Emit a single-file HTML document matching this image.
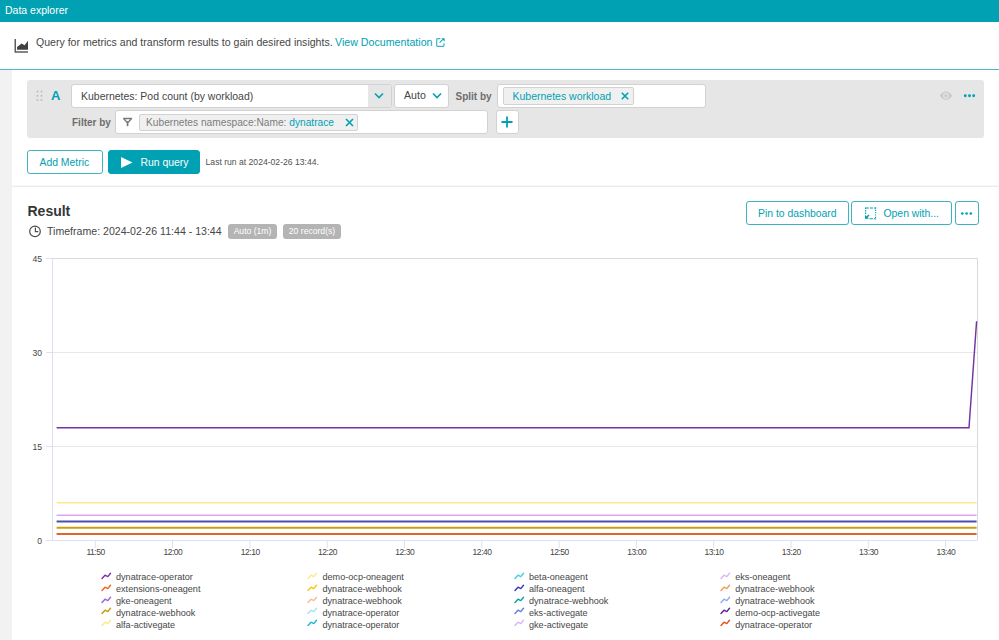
<!DOCTYPE html>
<html><head><meta charset="utf-8">
<style>
*{box-sizing:border-box;margin:0;padding:0}
html,body{width:999px;height:640px;overflow:hidden;background:#fff;font-family:"Liberation Sans",sans-serif;color:#454646}
.a{position:absolute;white-space:nowrap}
#hdr{left:0;top:0;width:999px;height:22px;background:#00a1b2}
#hdr span{position:absolute;left:5px;top:4.2px;font-size:10.5px;color:#fff}
#strip{left:0;top:70px;width:12px;height:570px;background:#f2f2f2}
#tline{left:0;top:69px;width:999px;height:1px;background:#4cb9c5}
#panel{left:27px;top:80px;width:957px;height:58.4px;background:#e6e6e6;border-radius:3px}
.inp{position:absolute;background:#fff;border:1px solid #d2d2d2;border-radius:3px}
.chip{position:absolute;background:#f0f0f0;border:1px solid #d2d2d2;border-radius:2px}
.btn{position:absolute;border:1px solid #00a1b2;border-radius:3px;color:#00a1b2;background:#fff;font-size:10.4px}
.lbl{font-weight:bold;color:#6d6d6d;font-size:10px}
.badge{position:absolute;background:#b4b4b4;color:#fff;border-radius:3px;height:14.6px;font-size:8.6px;text-align:center;line-height:15px}
#sep{left:12px;top:186px;width:987px;height:1px;background:#ececec;box-shadow:0 -1px 0 #f7f7f7}
</style></head>
<body>
<div id="hdr" class="a"><span>Data explorer</span></div>
<svg class="a" style="left:10px;top:34px" width="24" height="24" viewBox="0 0 24 24">
<path d="M5.25 4.9V18.1H18" stroke="#5e5e5e" stroke-width="1.5" fill="none"/>
<path d="M7.1 15.8V13.1L11.6 9.5L14.6 11.3L18 6.8V15.8Z" fill="#404040"/>
</svg>
<div class="a" style="left:36px;top:36px;font-size:10.55px">Query for metrics and transform results to gain desired insights.</div><div class="a" style="left:335px;top:36px;font-size:10.66px;color:#00a1b2">View Documentation</div>
<svg class="a" style="left:436px;top:38px" width="9" height="9" viewBox="0 0 9 9"><path d="M4.2 0.7H1.5Q0.7 0.7 0.7 1.5V7.5Q0.7 8.3 1.5 8.3H7.2Q8 8.3 8 7.5V5.2" stroke="#3fb3c0" stroke-width="1.2" fill="none"/><path d="M3.6 4.6L6.6 1.6" stroke="#1aa8b8" stroke-width="1.2"/><path d="M5.2 0.2H8.6V3.6Z" fill="#00a1b2"/></svg>
<div id="tline" class="a"></div>
<div id="strip" class="a"></div>
<div id="sep" class="a"></div>

<!-- query panel -->
<div id="panel" class="a"></div>
<svg class="a" style="left:36px;top:90px" width="8" height="12" viewBox="0 0 8 12"><g fill="#bdbdbd"><circle cx="1.5" cy="1.5" r="1"/><circle cx="5.5" cy="1.5" r="1"/><circle cx="1.5" cy="5.8" r="1"/><circle cx="5.5" cy="5.8" r="1"/><circle cx="1.5" cy="10" r="1"/><circle cx="5.5" cy="10" r="1"/></g></svg>
<div class="a" style="left:51px;top:88px;font-size:13px;font-weight:bold;color:#00a1b2">A</div>
<div class="inp" style="left:71px;top:84px;width:321px;height:24px;overflow:hidden"><div style="position:absolute;right:0;top:0;width:23px;height:22px;background:#e6e6e6"></div></div>
<div class="a" style="left:81px;top:90.7px;font-size:10.47px">Kubernetes: Pod count (by workload)</div>
<svg class="a" style="left:374px;top:92px" width="10" height="8" viewBox="0 0 10 8"><path d="M1 1.5L5 5.5L9 1.5" stroke="#00a1b2" stroke-width="1.6" fill="none"/></svg>
<div class="inp" style="left:394px;top:84px;width:55px;height:24px"></div>
<div class="a" style="left:404px;top:89px;font-size:10.6px">Auto</div>
<svg class="a" style="left:432px;top:92px" width="10" height="8" viewBox="0 0 10 8"><path d="M1 1.5L5 5.5L9 1.5" stroke="#00a1b2" stroke-width="1.6" fill="none"/></svg>
<div class="a lbl" style="left:455.5px;top:90.8px">Split by</div>
<div class="inp" style="left:496.5px;top:84px;width:209px;height:24px"></div>
<div class="chip" style="left:503px;top:87px;width:131px;height:18px"></div>
<div class="a" style="left:512.5px;top:90px;font-size:10.5px;color:#00a1b2">Kubernetes workload</div>
<svg class="a" style="left:621px;top:92px" width="8" height="8" viewBox="0 0 8 8"><path d="M0.8 0.8L7.2 7.2M7.2 0.8L0.8 7.2" stroke="#00a1b2" stroke-width="1.6"/></svg>
<svg class="a" style="left:938px;top:89px" width="16" height="14" viewBox="0 0 16 14"><path d="M1.8 6.7C3.6 3.9 5.6 2.5 8 2.5S12.4 3.9 14.2 6.7C12.4 9.5 10.4 10.8 8 10.8S3.6 9.5 1.8 6.7Z" fill="#cbcbcb"/><circle cx="8" cy="6.7" r="2.9" fill="#e4e4e4"/><circle cx="8" cy="6.7" r="1.8" fill="#cccccc"/></svg>
<svg class="a" style="left:963px;top:93px" width="13" height="5" viewBox="0 0 13 5"><g fill="#00a1b2"><circle cx="2.3" cy="2.7" r="1.45"/><circle cx="6.5" cy="2.7" r="1.45"/><circle cx="10.7" cy="2.7" r="1.45"/></g></svg>
<div class="a lbl" style="left:72px;top:117.2px">Filter by</div>
<div class="inp" style="left:115.3px;top:110px;width:373px;height:24px"></div>
<svg class="a" style="left:118px;top:112px" width="20" height="20" viewBox="0 0 20 20"><path d="M5.6 6.5H13.6L10.5 10H8.7Z" fill="none" stroke="#7a7a7a" stroke-width="1.3" stroke-linejoin="round"/><path d="M8.7 9.5H10.4V14.1Q9.55 14.6 8.7 14.1Z" fill="#7a7a7a"/></svg>
<div class="chip" style="left:139px;top:113.5px;width:219px;height:17px"></div>
<div class="a" style="left:146px;top:117.2px;font-size:10.2px;color:#7c7c7c">Kubernetes namespace:Name: <span style="color:#00a1b2">dynatrace</span></div>
<svg class="a" style="left:345px;top:118px" width="9" height="9" viewBox="0 0 9 9"><path d="M1 1L8 8M8 1L1 8" stroke="#00a1b2" stroke-width="1.6"/></svg>
<div class="inp" style="left:495.5px;top:110px;width:23.5px;height:24px"></div>
<svg class="a" style="left:501px;top:116px" width="12" height="12" viewBox="0 0 12 12"><path d="M6 0.5V11.5M0.5 6H11.5" stroke="#00a1b2" stroke-width="1.8"/></svg>

<!-- actions -->
<div class="btn" style="left:27px;top:150px;width:76px;height:24px;border-color:#3fb3c0"><span class="a" style="left:11.5px;top:6px">Add Metric</span></div>
<div class="btn" style="left:108px;top:150px;width:92px;height:24px;background:#00a1b2;color:#fff"></div>
<svg class="a" style="left:121px;top:157px" width="12" height="11" viewBox="0 0 12 11"><path d="M0 0L11.5 5.5L0 11Z" fill="#fff"/></svg>
<div class="a" style="left:140.5px;top:157.2px;font-size:10.4px;color:#fff">Run query</div>
<div class="a" style="left:205.6px;top:157.3px;font-size:8.6px;color:#505050">Last run at 2024-02-26 13:44.</div>

<!-- result -->
<div class="a" style="left:27.5px;top:203.3px;font-size:14px;font-weight:bold;color:#353535">Result</div>
<svg class="a" style="left:28px;top:224px" width="14" height="14" viewBox="0 0 14 14"><circle cx="7" cy="7.4" r="5.3" fill="none" stroke="#4a4a4a" stroke-width="1.2"/><path d="M7.4 3.6V7.6H10.3" fill="none" stroke="#4a4a4a" stroke-width="1.2"/></svg>
<div class="a" style="left:47px;top:225px;font-size:10.58px">Timeframe: 2024-02-26 11:44 - 13:44</div>
<div class="badge" style="left:228px;top:224px;width:49px">Auto (1m)</div>
<div class="badge" style="left:283px;top:224px;width:58px">20 record(s)</div>
<div class="btn" style="left:746px;top:201px;width:102.5px;height:24px;border-color:#3db3c0"><span class="a" style="left:11px;top:6px">Pin to dashboard</span></div>
<div class="btn" style="left:851px;top:201px;width:100.5px;height:24px;border-color:#3db3c0"></div>
<svg class="a" style="left:860px;top:202px" width="24" height="22" viewBox="0 0 24 22"><g fill="none" stroke="#00a1b2" stroke-width="1.1"><path d="M5.6 6.0H16.1" stroke-dasharray="3.2 1 3.2 1 2"/><path d="M15.6 5.5V17.3" stroke-dasharray="1.2 1.1"/><path d="M5.6 5.5V12.6" stroke-dasharray="1.4 1.1"/><path d="M9.6 16.8H16.1" stroke-dasharray="3.2 1 2"/></g><path d="M5 16.8V12.8L9.1 16.8Z" fill="#00a1b2"/><path d="M5.7 16.3L9 12.9" stroke="#00a1b2" stroke-width="1.5"/></svg>
<div class="a" style="left:883.5px;top:207.9px;font-size:10.4px;color:#00a1b2">Open with...</div>
<div class="btn" style="left:955px;top:201px;width:23.5px;height:24px;border-color:#3db3c0"></div>
<svg class="a" style="left:959px;top:210.5px" width="14" height="5" viewBox="0 0 14 5"><g fill="#00a1b2"><circle cx="3.3" cy="2.5" r="1.35"/><circle cx="7.6" cy="2.5" r="1.35"/><circle cx="11.8" cy="2.5" r="1.35"/></g></svg>
<svg class="a" style="left:0;top:0" width="999" height="640" viewBox="0 0 999 640" font-family="Liberation Sans, sans-serif">
<line x1="52" y1="446.5" x2="977" y2="446.5" stroke="#e8e8e8" stroke-width="1"/>
<line x1="52" y1="352.5" x2="977" y2="352.5" stroke="#e8e8e8" stroke-width="1"/>
<path d="M52 258.5H977.5V540" fill="none" stroke="#d9d9d9" stroke-width="1"/>
<line x1="46" y1="540.5" x2="52" y2="540.5" stroke="#dbe1f2" stroke-width="1"/>
<line x1="46" y1="446.5" x2="52" y2="446.5" stroke="#dbe1f2" stroke-width="1"/>
<line x1="46" y1="352.5" x2="52" y2="352.5" stroke="#dbe1f2" stroke-width="1"/>
<line x1="46" y1="258.5" x2="52" y2="258.5" stroke="#dbe1f2" stroke-width="1"/>
<line x1="52.5" y1="258" x2="52.5" y2="541" stroke="#dbe1f2" stroke-width="1"/>
<line x1="46" y1="540.5" x2="977.5" y2="540.5" stroke="#dbe1f2" stroke-width="1"/>
<line x1="95.3" y1="540" x2="95.3" y2="548" stroke="#dbe1f2" stroke-width="1"/>
<text x="95.6" y="554.8" font-size="8.5" letter-spacing="-0.45" text-anchor="middle" fill="#454646">11:50</text>
<line x1="172.6" y1="540" x2="172.6" y2="548" stroke="#dbe1f2" stroke-width="1"/>
<text x="172.9" y="554.8" font-size="8.5" letter-spacing="-0.45" text-anchor="middle" fill="#454646">12:00</text>
<line x1="249.9" y1="540" x2="249.9" y2="548" stroke="#dbe1f2" stroke-width="1"/>
<text x="250.2" y="554.8" font-size="8.5" letter-spacing="-0.45" text-anchor="middle" fill="#454646">12:10</text>
<line x1="327.2" y1="540" x2="327.2" y2="548" stroke="#dbe1f2" stroke-width="1"/>
<text x="327.5" y="554.8" font-size="8.5" letter-spacing="-0.45" text-anchor="middle" fill="#454646">12:20</text>
<line x1="404.5" y1="540" x2="404.5" y2="548" stroke="#dbe1f2" stroke-width="1"/>
<text x="404.8" y="554.8" font-size="8.5" letter-spacing="-0.45" text-anchor="middle" fill="#454646">12:30</text>
<line x1="481.8" y1="540" x2="481.8" y2="548" stroke="#dbe1f2" stroke-width="1"/>
<text x="482.1" y="554.8" font-size="8.5" letter-spacing="-0.45" text-anchor="middle" fill="#454646">12:40</text>
<line x1="559.1" y1="540" x2="559.1" y2="548" stroke="#dbe1f2" stroke-width="1"/>
<text x="559.4" y="554.8" font-size="8.5" letter-spacing="-0.45" text-anchor="middle" fill="#454646">12:50</text>
<line x1="636.4" y1="540" x2="636.4" y2="548" stroke="#dbe1f2" stroke-width="1"/>
<text x="636.7" y="554.8" font-size="8.5" letter-spacing="-0.45" text-anchor="middle" fill="#454646">13:00</text>
<line x1="713.7" y1="540" x2="713.7" y2="548" stroke="#dbe1f2" stroke-width="1"/>
<text x="714.0" y="554.8" font-size="8.5" letter-spacing="-0.45" text-anchor="middle" fill="#454646">13:10</text>
<line x1="791.0" y1="540" x2="791.0" y2="548" stroke="#dbe1f2" stroke-width="1"/>
<text x="791.3" y="554.8" font-size="8.5" letter-spacing="-0.45" text-anchor="middle" fill="#454646">13:20</text>
<line x1="868.3" y1="540" x2="868.3" y2="548" stroke="#dbe1f2" stroke-width="1"/>
<text x="868.6" y="554.8" font-size="8.5" letter-spacing="-0.45" text-anchor="middle" fill="#454646">13:30</text>
<line x1="945.6" y1="540" x2="945.6" y2="548" stroke="#dbe1f2" stroke-width="1"/>
<text x="945.9" y="554.8" font-size="8.5" letter-spacing="-0.45" text-anchor="middle" fill="#454646">13:40</text>
<text x="42" y="543.5" font-size="8.6" text-anchor="end" fill="#454646">0</text>
<text x="42" y="449.5" font-size="8.6" text-anchor="end" fill="#454646">15</text>
<text x="42" y="355.5" font-size="8.6" text-anchor="end" fill="#454646">30</text>
<text x="42" y="261.5" font-size="8.6" text-anchor="end" fill="#454646">45</text>
<line x1="56.6" y1="502.7" x2="976.6" y2="502.7" stroke="#fce98c" stroke-width="1.5"/>
<line x1="56.6" y1="515.2" x2="976.6" y2="515.2" stroke="#d9a8f0" stroke-width="1.5"/>
<line x1="56.6" y1="521.5" x2="976.6" y2="521.5" stroke="#4b4eb0" stroke-width="2"/>
<line x1="56.6" y1="527.8" x2="976.6" y2="527.8" stroke="#c9a10c" stroke-width="2"/>
<line x1="56.6" y1="534.0" x2="976.6" y2="534.0" stroke="#e0642c" stroke-width="2"/>
<path d="M56.6 427.7H969L976.6 321.2" fill="none" stroke="#7432a4" stroke-width="1.45"/>
</svg><!-- legend -->
<svg class="a" style="left:101.0px;top:570.9px" width="11" height="10" viewBox="0 0 11 10"><path d="M1 7.5L4 4.2L6.8 5.6L9.5 2.2" fill="none" stroke="#7b2fa6" stroke-width="1.4" stroke-linecap="round" stroke-linejoin="round"/></svg>
<div class="a" style="left:116px;top:572.3px;font-size:9.1px">dynatrace-operator</div>
<svg class="a" style="left:101.0px;top:582.7px" width="11" height="10" viewBox="0 0 11 10"><path d="M1 7.5L4 4.2L6.8 5.6L9.5 2.2" fill="none" stroke="#f2601f" stroke-width="1.4" stroke-linecap="round" stroke-linejoin="round"/></svg>
<div class="a" style="left:116px;top:584.1px;font-size:9.1px">extensions-oneagent</div>
<svg class="a" style="left:101.0px;top:594.5px" width="11" height="10" viewBox="0 0 11 10"><path d="M1 7.5L4 4.2L6.8 5.6L9.5 2.2" fill="none" stroke="#9b5fdc" stroke-width="1.4" stroke-linecap="round" stroke-linejoin="round"/></svg>
<div class="a" style="left:116px;top:595.9px;font-size:9.1px">gke-oneagent</div>
<svg class="a" style="left:101.0px;top:606.3px" width="11" height="10" viewBox="0 0 11 10"><path d="M1 7.5L4 4.2L6.8 5.6L9.5 2.2" fill="none" stroke="#c49a06" stroke-width="1.4" stroke-linecap="round" stroke-linejoin="round"/></svg>
<div class="a" style="left:116px;top:607.7px;font-size:9.1px">dynatrace-webhook</div>
<svg class="a" style="left:101.0px;top:618.1px" width="11" height="10" viewBox="0 0 11 10"><path d="M1 7.5L4 4.2L6.8 5.6L9.5 2.2" fill="none" stroke="#fde88e" stroke-width="1.4" stroke-linecap="round" stroke-linejoin="round"/></svg>
<div class="a" style="left:116px;top:619.5px;font-size:9.1px">alfa-activegate</div>
<svg class="a" style="left:307.3px;top:570.9px" width="11" height="10" viewBox="0 0 11 10"><path d="M1 7.5L4 4.2L6.8 5.6L9.5 2.2" fill="none" stroke="#fde88e" stroke-width="1.4" stroke-linecap="round" stroke-linejoin="round"/></svg>
<div class="a" style="left:322.5px;top:572.3px;font-size:9.1px">demo-ocp-oneagent</div>
<svg class="a" style="left:307.3px;top:582.7px" width="11" height="10" viewBox="0 0 11 10"><path d="M1 7.5L4 4.2L6.8 5.6L9.5 2.2" fill="none" stroke="#f2c80f" stroke-width="1.4" stroke-linecap="round" stroke-linejoin="round"/></svg>
<div class="a" style="left:322.5px;top:584.1px;font-size:9.1px">dynatrace-webhook</div>
<svg class="a" style="left:307.3px;top:594.5px" width="11" height="10" viewBox="0 0 11 10"><path d="M1 7.5L4 4.2L6.8 5.6L9.5 2.2" fill="none" stroke="#fbb996" stroke-width="1.4" stroke-linecap="round" stroke-linejoin="round"/></svg>
<div class="a" style="left:322.5px;top:595.9px;font-size:9.1px">dynatrace-webhook</div>
<svg class="a" style="left:307.3px;top:606.3px" width="11" height="10" viewBox="0 0 11 10"><path d="M1 7.5L4 4.2L6.8 5.6L9.5 2.2" fill="none" stroke="#a6e3ee" stroke-width="1.4" stroke-linecap="round" stroke-linejoin="round"/></svg>
<div class="a" style="left:322.5px;top:607.7px;font-size:9.1px">dynatrace-operator</div>
<svg class="a" style="left:307.3px;top:618.1px" width="11" height="10" viewBox="0 0 11 10"><path d="M1 7.5L4 4.2L6.8 5.6L9.5 2.2" fill="none" stroke="#20b8d0" stroke-width="1.4" stroke-linecap="round" stroke-linejoin="round"/></svg>
<div class="a" style="left:322.5px;top:619.5px;font-size:9.1px">dynatrace-operator</div>
<svg class="a" style="left:513.8px;top:570.9px" width="11" height="10" viewBox="0 0 11 10"><path d="M1 7.5L4 4.2L6.8 5.6L9.5 2.2" fill="none" stroke="#3fd0dc" stroke-width="1.4" stroke-linecap="round" stroke-linejoin="round"/></svg>
<div class="a" style="left:529px;top:572.3px;font-size:9.1px">beta-oneagent</div>
<svg class="a" style="left:513.8px;top:582.7px" width="11" height="10" viewBox="0 0 11 10"><path d="M1 7.5L4 4.2L6.8 5.6L9.5 2.2" fill="none" stroke="#3338c0" stroke-width="1.4" stroke-linecap="round" stroke-linejoin="round"/></svg>
<div class="a" style="left:529px;top:584.1px;font-size:9.1px">alfa-oneagent</div>
<svg class="a" style="left:513.8px;top:594.5px" width="11" height="10" viewBox="0 0 11 10"><path d="M1 7.5L4 4.2L6.8 5.6L9.5 2.2" fill="none" stroke="#0f9ea8" stroke-width="1.4" stroke-linecap="round" stroke-linejoin="round"/></svg>
<div class="a" style="left:529px;top:595.9px;font-size:9.1px">dynatrace-webhook</div>
<svg class="a" style="left:513.8px;top:606.3px" width="11" height="10" viewBox="0 0 11 10"><path d="M1 7.5L4 4.2L6.8 5.6L9.5 2.2" fill="none" stroke="#5f7de8" stroke-width="1.4" stroke-linecap="round" stroke-linejoin="round"/></svg>
<div class="a" style="left:529px;top:607.7px;font-size:9.1px">eks-activegate</div>
<svg class="a" style="left:513.8px;top:618.1px" width="11" height="10" viewBox="0 0 11 10"><path d="M1 7.5L4 4.2L6.8 5.6L9.5 2.2" fill="none" stroke="#d8b6f2" stroke-width="1.4" stroke-linecap="round" stroke-linejoin="round"/></svg>
<div class="a" style="left:529px;top:619.5px;font-size:9.1px">gke-activegate</div>
<svg class="a" style="left:720.0px;top:570.9px" width="11" height="10" viewBox="0 0 11 10"><path d="M1 7.5L4 4.2L6.8 5.6L9.5 2.2" fill="none" stroke="#d8b6f2" stroke-width="1.4" stroke-linecap="round" stroke-linejoin="round"/></svg>
<div class="a" style="left:735.2px;top:572.3px;font-size:9.1px">eks-oneagent</div>
<svg class="a" style="left:720.0px;top:582.7px" width="11" height="10" viewBox="0 0 11 10"><path d="M1 7.5L4 4.2L6.8 5.6L9.5 2.2" fill="none" stroke="#f59a55" stroke-width="1.4" stroke-linecap="round" stroke-linejoin="round"/></svg>
<div class="a" style="left:735.2px;top:584.1px;font-size:9.1px">dynatrace-webhook</div>
<svg class="a" style="left:720.0px;top:594.5px" width="11" height="10" viewBox="0 0 11 10"><path d="M1 7.5L4 4.2L6.8 5.6L9.5 2.2" fill="none" stroke="#90a8f5" stroke-width="1.4" stroke-linecap="round" stroke-linejoin="round"/></svg>
<div class="a" style="left:735.2px;top:595.9px;font-size:9.1px">dynatrace-webhook</div>
<svg class="a" style="left:720.0px;top:606.3px" width="11" height="10" viewBox="0 0 11 10"><path d="M1 7.5L4 4.2L6.8 5.6L9.5 2.2" fill="none" stroke="#5e1f90" stroke-width="1.4" stroke-linecap="round" stroke-linejoin="round"/></svg>
<div class="a" style="left:735.2px;top:607.7px;font-size:9.1px">demo-ocp-activegate</div>
<svg class="a" style="left:720.0px;top:618.1px" width="11" height="10" viewBox="0 0 11 10"><path d="M1 7.5L4 4.2L6.8 5.6L9.5 2.2" fill="none" stroke="#e5501a" stroke-width="1.4" stroke-linecap="round" stroke-linejoin="round"/></svg>
<div class="a" style="left:735.2px;top:619.5px;font-size:9.1px">dynatrace-operator</div>
</body></html>
